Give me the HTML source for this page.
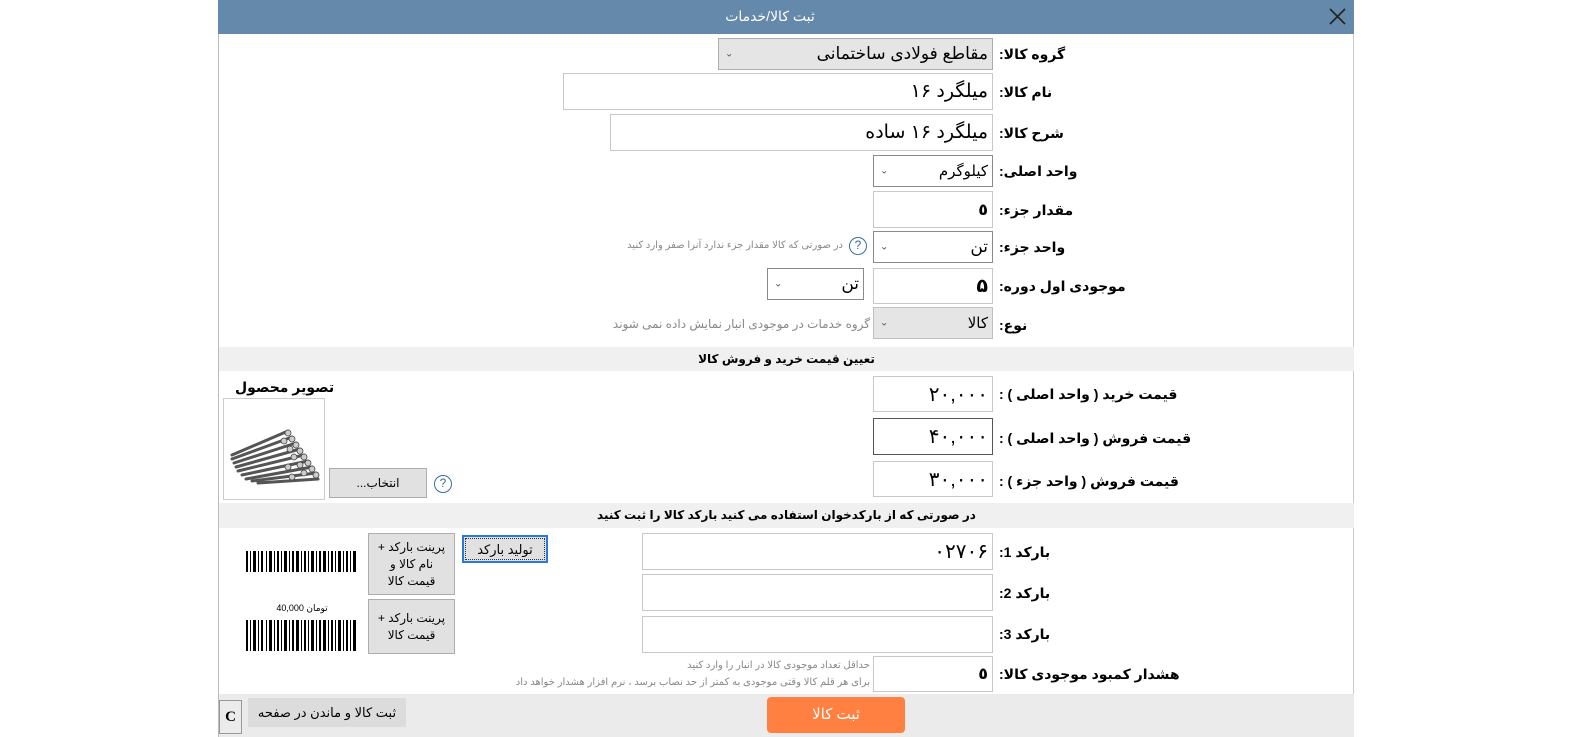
<!DOCTYPE html>
<html><head><meta charset="utf-8"><style>
*{box-sizing:border-box;margin:0;padding:0}
body{width:1579px;height:737px;background:#fff;position:relative;overflow:hidden;font-family:"Liberation Sans","DejaVu Sans",sans-serif;color:#000}
.a{position:absolute}
.hdr{left:218px;top:0;width:1136px;height:34px;background:#6489aa}
.box{position:absolute;border:1px solid #c8c8c8;background:#fff;direction:rtl;font-size:19px;padding-right:4px;display:flex;align-items:center}
.sel{position:absolute;border:1px solid #8a8a8a;background:#fff;direction:rtl;font-size:17px;padding-right:4px;display:flex;align-items:center}
.sel .ch{position:absolute;left:6px;top:50%;transform:translateY(-50%);font-size:10px;color:#555}
.lbl{position:absolute;left:999px;direction:rtl;font-size:14px;font-weight:bold;white-space:nowrap;text-align:right}
.hint{position:absolute;direction:rtl;font-size:11px;color:#888;white-space:nowrap;text-align:right}
.bar{position:absolute;left:219px;width:1135px;background:#f0f0f0;font-size:12px;font-weight:bold;direction:rtl;text-align:center}
.btn{position:absolute;background:#e1e1e1;border:1px solid #adadad;direction:rtl;font-size:12px;display:flex;align-items:center;justify-content:center;text-align:center;line-height:17px}
.help{position:absolute;width:18px;height:18px;border:1.5px solid #3a6e9e;border-radius:50%;color:#3a6e9e;font-size:12px;text-align:center;line-height:15px}
</style></head><body>
<div class="a" style="left:218px;top:0;width:1px;height:737px;background:#bbb"></div>
<div class="a" style="left:1353px;top:0;width:1px;height:737px;background:#ccc"></div>
<div class="a hdr"></div>
<div class="a" style="left:660px;top:8px;width:220px;text-align:center;color:#fff;font-size:14px;direction:rtl">ثبت کالا/خدمات</div>
<svg class="a" style="left:1328px;top:7px" width="19" height="19" viewBox="0 0 19 19"><path d="M2 2L17 17M17 2L2 17" stroke="#222" stroke-width="1.6"/></svg>

<div class="lbl" style="top:46px">گروه کالا:</div>
<div class="sel" style="left:718px;top:38px;width:275px;height:32px;background:#e5e5e5;border-color:#adadad">مقاطع فولادی ساختمانی<span class="ch">&#8964;</span></div>

<div class="lbl" style="top:84px">نام کالا:</div>
<div class="box" style="left:563px;top:73px;width:430px;height:37px">میلگرد ۱۶</div>

<div class="lbl" style="top:125px">شرح کالا:</div>
<div class="box" style="left:610px;top:114px;width:383px;height:37px">میلگرد ۱۶ ساده</div>

<div class="lbl" style="top:163px">واحد اصلی:</div>
<div class="sel" style="left:873px;top:155px;width:120px;height:32px;font-size:15px">کیلوگرم<span class="ch">&#8964;</span></div>

<div class="lbl" style="top:202px">مقدار جزء:</div>
<div class="box" style="left:873px;top:191px;width:120px;height:37px;font-size:16px;font-weight:bold">٥</div>

<div class="lbl" style="top:239px">واحد جزء:</div>
<div class="sel" style="left:873px;top:231px;width:120px;height:32px">تن<span class="ch">&#8964;</span></div>
<div class="help" style="left:849px;top:237px">?</div>
<div class="hint" style="right:736px;top:240px;font-size:10px">در صورتی که کالا مقدار جزء ندارد آنرا صفر وارد کنید</div>

<div class="lbl" style="top:278px">موجودی اول دوره:</div>
<div class="box" style="left:873px;top:268px;width:120px;height:36px;font-weight:bold">۵</div>
<div class="sel" style="left:767px;top:268px;width:97px;height:32px">تن<span class="ch">&#8964;</span></div>

<div class="lbl" style="top:317px">نوع:</div>
<div class="sel" style="left:873px;top:307px;width:120px;height:32px;background:#e5e5e5;border-color:#c0c0c0;font-size:15px">کالا<span class="ch">&#8964;</span></div>
<div class="hint" style="right:709px;top:317px;font-size:12px">گروه خدمات در موجودی انبار نمایش داده نمی شوند</div>

<div class="bar" style="top:347px;height:24px;line-height:24px">تعیین قیمت خرید و فروش کالا</div>

<div class="lbl" style="top:386px">قیمت خرید ( واحد اصلی ) :</div>
<div class="box" style="left:873px;top:376px;width:120px;height:36px;font-size:20px">۲۰,۰۰۰</div>
<div class="lbl" style="top:430px">قیمت فروش ( واحد اصلی ) :</div>
<div class="box" style="left:873px;top:418px;width:120px;height:37px;font-size:20px;border-color:#555">۴۰,۰۰۰</div>
<div class="lbl" style="top:473px">قیمت فروش ( واحد جزء ) :</div>
<div class="box" style="left:873px;top:461px;width:120px;height:36px;font-size:20px">۳۰,۰۰۰</div>

<div class="lbl" style="left:235px;top:379px">تصویر محصول</div>
<div class="a" style="left:223px;top:398px;width:102px;height:102px;border:1px solid #ccc"></div>
<svg class="a" style="left:228px;top:425px" width="92" height="62" viewBox="0 0 92 62">
<g stroke="#555" stroke-width="3" stroke-linecap="round">
<path d="M4 30L60 6M4 34L64 12M6 38L68 18M8 42L72 24M10 46L76 30M14 50L80 36M18 54L84 42M24 56L88 48M30 58L90 54"/></g>
<g fill="#ccc" stroke="#444" stroke-width="0.8">
<circle cx="60" cy="8" r="3"/><circle cx="64" cy="14" r="3"/><circle cx="68" cy="20" r="3"/><circle cx="72" cy="26" r="3"/><circle cx="76" cy="32" r="3"/><circle cx="80" cy="38" r="3"/><circle cx="84" cy="44" r="3"/><circle cx="88" cy="50" r="3"/><circle cx="56" cy="16" r="3"/><circle cx="62" cy="24" r="3"/><circle cx="66" cy="32" r="3"/><circle cx="72" cy="40" r="3"/><circle cx="76" cy="48" r="3"/><circle cx="60" cy="42" r="3"/><circle cx="64" cy="52" r="3"/></g></svg>
<div class="btn" style="left:329px;top:468px;width:98px;height:30px">انتخاب...</div>
<div class="help" style="left:434px;top:475px">?</div>

<div class="bar" style="top:503px;height:25px;line-height:25px">در صورتی که از بارکدخوان استفاده می کنید بارکد کالا را ثبت کنید</div>

<div class="lbl" style="top:544px">بارکد 1:</div>
<div class="box" style="left:642px;top:533px;width:351px;height:37px;font-size:20px">۰۲۷۰۶</div>
<div class="lbl" style="top:585px">بارکد 2:</div>
<div class="box" style="left:642px;top:574px;width:351px;height:37px"></div>
<div class="lbl" style="top:626px">بارکد 3:</div>
<div class="box" style="left:642px;top:616px;width:351px;height:37px"></div>

<div class="btn" style="left:462px;top:535px;width:86px;height:28px;border:2px solid #2a7ad8;font-size:13px;outline:1px dotted #333;outline-offset:-4px">تولید بارکد</div>
<div class="btn" style="left:368px;top:533px;width:87px;height:62px;font-size:12px">پرینت بارکد +<br>نام کالا و<br>قیمت کالا</div>
<div class="btn" style="left:368px;top:599px;width:87px;height:55px;font-size:12px">پرینت بارکد +<br>قیمت کالا</div>

<svg class="a" style="left:246px;top:551px" width="112" height="21"><g fill="#000">
<rect x="0" width="2" height="21"/><rect x="4" width="1" height="21"/><rect x="7" width="3" height="21"/><rect x="12" width="1" height="21"/><rect x="15" width="2" height="21"/><rect x="20" width="1" height="21"/><rect x="23" width="3" height="21"/><rect x="28" width="1" height="21"/><rect x="31" width="2" height="21"/><rect x="35" width="1" height="21"/><rect x="38" width="3" height="21"/><rect x="43" width="1" height="21"/><rect x="46" width="2" height="21"/><rect x="50" width="3" height="21"/><rect x="55" width="1" height="21"/><rect x="58" width="2" height="21"/><rect x="62" width="1" height="21"/><rect x="65" width="3" height="21"/><rect x="70" width="1" height="21"/><rect x="73" width="2" height="21"/><rect x="77" width="3" height="21"/><rect x="82" width="1" height="21"/><rect x="85" width="2" height="21"/><rect x="89" width="1" height="21"/><rect x="92" width="3" height="21"/><rect x="97" width="1" height="21"/><rect x="100" width="2" height="21"/><rect x="104" width="1" height="21"/><rect x="107" width="3" height="21"/></g></svg>
<div class="a" style="left:246px;top:603px;width:112px;text-align:center;font-size:9px;direction:rtl">تومان 40,000</div>
<svg class="a" style="left:246px;top:620px" width="112" height="31"><g fill="#000">
<rect x="0" width="2" height="31"/><rect x="4" width="1" height="31"/><rect x="7" width="3" height="31"/><rect x="12" width="1" height="31"/><rect x="15" width="2" height="31"/><rect x="20" width="1" height="31"/><rect x="23" width="3" height="31"/><rect x="28" width="1" height="31"/><rect x="31" width="2" height="31"/><rect x="35" width="1" height="31"/><rect x="38" width="3" height="31"/><rect x="43" width="1" height="31"/><rect x="46" width="2" height="31"/><rect x="50" width="3" height="31"/><rect x="55" width="1" height="31"/><rect x="58" width="2" height="31"/><rect x="62" width="1" height="31"/><rect x="65" width="3" height="31"/><rect x="70" width="1" height="31"/><rect x="73" width="2" height="31"/><rect x="77" width="3" height="31"/><rect x="82" width="1" height="31"/><rect x="85" width="2" height="31"/><rect x="89" width="1" height="31"/><rect x="92" width="3" height="31"/><rect x="97" width="1" height="31"/><rect x="100" width="2" height="31"/><rect x="104" width="1" height="31"/><rect x="107" width="3" height="31"/></g></svg>

<div class="lbl" style="top:666px">هشدار کمبود موجودی کالا:</div>
<div class="box" style="left:873px;top:656px;width:120px;height:36px;font-size:16px;font-weight:bold">٥</div>
<div class="hint" style="right:709px;top:657px;font-size:10px;line-height:17px">حداقل تعداد موجودی کالا در انبار را وارد کنید<br>برای هر قلم کالا وقتی موجودی به کمتر از حد نصاب برسد ، نرم افزار هشدار خواهد داد</div>

<div class="a" style="left:219px;top:694px;width:1135px;height:43px;background:#ebebeb"></div>
<div class="a" style="left:767px;top:697px;width:138px;height:36px;background:#ff8040;border-radius:4px;color:#fff;font-size:15px;text-align:center;line-height:36px;direction:rtl">ثبت کالا</div>
<div class="a" style="left:219px;top:700px;width:23px;height:34px;border:1px solid #999;font-family:'Liberation Serif',serif;font-weight:bold;font-size:15px;text-align:center;line-height:32px">C</div>
<div class="a" style="left:248px;top:698px;width:158px;height:29px;background:#dcdcdc;font-size:13px;text-align:center;line-height:29px;direction:rtl">ثبت کالا و ماندن در صفحه</div>
</body></html>
